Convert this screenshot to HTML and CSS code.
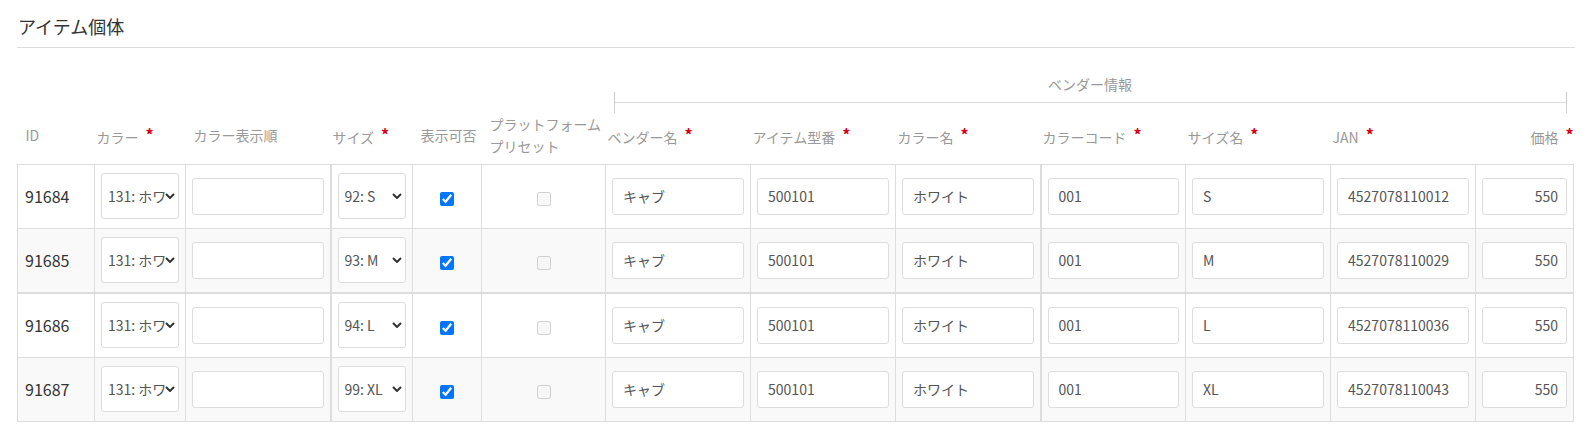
FILE: index.html
```html
<!DOCTYPE html>
<html lang="ja">
<head>
    <meta charset="UTF-8">
    <meta name="viewport" content="width=device-width, initial-scale=1.0">
    <title>アイテム個体</title>

    <!-- estilo -->
    <link rel="stylesheet" href="styles.css">
</head>
<body>
    <div id="itemSection">
        <h2 class="sectionTitle">アイテム個体</h2>

        <table class="itemTable">
            <colgroup>
                <col class="colId">
                <col class="colColor">
                <col class="colOrder">
                <col class="colSize">
                <col class="colShow">
                <col class="colPreset">
                <col class="colWide">
                <col class="colWide">
                <col class="colWide">
                <col class="colWide">
                <col class="colWide">
                <col class="colWide">
                <col class="colPrice">
            </colgroup>
            <thead>
                <tr>
                    <th colspan="6"></th>
                    <th colspan="7" class="groupHead">
                        <div class="groupLabel">ベンダー情報</div>
                        <div class="groupBracket">
                            <span class="tick"></span>
                            <span class="line"></span>
                            <span class="tick"></span>
                        </div>
                    </th>
                </tr>
                <tr class="labelRow">
                    <th class="padWide">ID</th>
                    <th>カラー<span class="req">*</span></th>
                    <th class="padWide">カラー表示順</th>
                    <th>サイズ<span class="req">*</span></th>
                    <th class="padWide">表示可否</th>
                    <th class="padWide">プラットフォーム<br>プリセット</th>
                    <th>ベンダー名<span class="req">*</span></th>
                    <th>アイテム型番<span class="req">*</span></th>
                    <th>カラー名<span class="req">*</span></th>
                    <th>カラーコード<span class="req">*</span></th>
                    <th>サイズ名<span class="req">*</span></th>
                    <th>JAN<span class="req">*</span></th>
                    <th class="alignRight">価格<span class="req">*</span></th>
                </tr>
            </thead>
            <tbody>
                <tr>
                    <td class="idCell">91684</td>
                    <td>
                        <div class="selectWrap">
                            <select class="field"><option>131: ホワイト</option></select>
                            <svg class="chevron" viewBox="0 0 10 6"><path d="M1 1l4 4 4-4"/></svg>
                        </div>
                    </td>
                    <td><input class="field" type="text"></td>
                    <td class="splitLeft">
                        <div class="selectWrap">
                            <select class="field"><option>92: S</option></select>
                            <svg class="chevron" viewBox="0 0 10 6"><path d="M1 1l4 4 4-4"/></svg>
                        </div>
                    </td>
                    <td class="center"><input type="checkbox" checked></td>
                    <td class="center"><input type="checkbox" disabled></td>
                    <td><input class="field" type="text" value="キャブ"></td>
                    <td><input class="field" type="text" value="500101"></td>
                    <td><input class="field" type="text" value="ホワイト"></td>
                    <td class="splitLeft"><input class="field" type="text" value="001"></td>
                    <td><input class="field" type="text" value="S"></td>
                    <td><input class="field" type="text" value="4527078110012"></td>
                    <td><input class="field price" type="text" value="550"></td>
                </tr>
                <tr class="striped">
                    <td class="idCell">91685</td>
                    <td>
                        <div class="selectWrap">
                            <select class="field"><option>131: ホワイト</option></select>
                            <svg class="chevron" viewBox="0 0 10 6"><path d="M1 1l4 4 4-4"/></svg>
                        </div>
                    </td>
                    <td><input class="field" type="text"></td>
                    <td class="splitLeft">
                        <div class="selectWrap">
                            <select class="field"><option>93: M</option></select>
                            <svg class="chevron" viewBox="0 0 10 6"><path d="M1 1l4 4 4-4"/></svg>
                        </div>
                    </td>
                    <td class="center"><input type="checkbox" checked></td>
                    <td class="center"><input type="checkbox" disabled></td>
                    <td><input class="field" type="text" value="キャブ"></td>
                    <td><input class="field" type="text" value="500101"></td>
                    <td><input class="field" type="text" value="ホワイト"></td>
                    <td class="splitLeft"><input class="field" type="text" value="001"></td>
                    <td><input class="field" type="text" value="M"></td>
                    <td><input class="field" type="text" value="4527078110029"></td>
                    <td><input class="field price" type="text" value="550"></td>
                </tr>
                <tr class="groupStart">
                    <td class="idCell">91686</td>
                    <td>
                        <div class="selectWrap">
                            <select class="field"><option>131: ホワイト</option></select>
                            <svg class="chevron" viewBox="0 0 10 6"><path d="M1 1l4 4 4-4"/></svg>
                        </div>
                    </td>
                    <td><input class="field" type="text"></td>
                    <td class="splitLeft">
                        <div class="selectWrap">
                            <select class="field"><option>94: L</option></select>
                            <svg class="chevron" viewBox="0 0 10 6"><path d="M1 1l4 4 4-4"/></svg>
                        </div>
                    </td>
                    <td class="center"><input type="checkbox" checked></td>
                    <td class="center"><input type="checkbox" disabled></td>
                    <td><input class="field" type="text" value="キャブ"></td>
                    <td><input class="field" type="text" value="500101"></td>
                    <td><input class="field" type="text" value="ホワイト"></td>
                    <td class="splitLeft"><input class="field" type="text" value="001"></td>
                    <td><input class="field" type="text" value="L"></td>
                    <td><input class="field" type="text" value="4527078110036"></td>
                    <td><input class="field price" type="text" value="550"></td>
                </tr>
                <tr class="striped">
                    <td class="idCell">91687</td>
                    <td>
                        <div class="selectWrap">
                            <select class="field"><option>131: ホワイト</option></select>
                            <svg class="chevron" viewBox="0 0 10 6"><path d="M1 1l4 4 4-4"/></svg>
                        </div>
                    </td>
                    <td><input class="field" type="text"></td>
                    <td class="splitLeft">
                        <div class="selectWrap">
                            <select class="field"><option>99: XL</option></select>
                            <svg class="chevron" viewBox="0 0 10 6"><path d="M1 1l4 4 4-4"/></svg>
                        </div>
                    </td>
                    <td class="center"><input type="checkbox" checked></td>
                    <td class="center"><input type="checkbox" disabled></td>
                    <td><input class="field" type="text" value="キャブ"></td>
                    <td><input class="field" type="text" value="500101"></td>
                    <td><input class="field" type="text" value="ホワイト"></td>
                    <td class="splitLeft"><input class="field" type="text" value="001"></td>
                    <td><input class="field" type="text" value="XL"></td>
                    <td><input class="field" type="text" value="4527078110043"></td>
                    <td><input class="field price" type="text" value="550"></td>
                </tr>
            </tbody>
        </table>
    </div>
</body>
</html>
```

FILE: styles.css
```css
body {
    margin: 0;
    font-family: "Noto Sans CJK JP", "Noto Sans", sans-serif;
    color: #333;
    background-color: white;
}

#itemSection {
    padding: 0 17px;
}

.sectionTitle {
    margin: 0;
    padding: 13px 0 8px 1px;
    font-size: 18px;
    line-height: 26px;
    font-weight: normal;
    color: #333;
    border-bottom: 1px solid #ddd;
}

.itemTable {
    margin-top: 28px;
    width: 1555px;
    table-layout: fixed;
    border-collapse: collapse;
}

.colId { width: 77px; }
.colColor { width: 91px; }
.colOrder { width: 145px; }
.colSize { width: 82px; }
.colShow { width: 69px; }
.colPreset { width: 124px; }
.colWide { width: 145px; }
.colPrice { width: 98px; }

th {
    padding: 0 2px 7px;
    font-size: 14px;
    line-height: 22px;
    font-weight: normal;
    color: #999;
    text-align: left;
    vertical-align: middle;
    white-space: nowrap;
}

.padWide {
    padding-left: 8px;
}

.alignRight {
    text-align: right;
    padding-right: 0;
}

.req {
    margin-left: 7px;
    color: #d9001b;
    font-size: 16px;
    font-weight: bold;
    vertical-align: 2px;
}

.groupHead {
    padding: 0 7px 0 8px;
}

.groupLabel {
    text-align: center;
    line-height: 16px;
    color: #999;
}

.groupBracket {
    display: flex;
    align-items: center;
    height: 21px;
}

.groupBracket .tick {
    width: 1px;
    height: 21px;
    background-color: #ccc;
}

.groupBracket .line {
    flex: 1;
    height: 1px;
    background-color: #ddd;
}

td {
    padding: 8px 6px 9px;
    border: 1px solid #ddd;
    vertical-align: middle;
    background-color: white;
}

.striped td {
    background-color: #f9f9f9;
}

.groupStart td {
    border-top: 2px solid #ddd;
}

.splitLeft {
    border-left: 2px solid #ddd;
}

.idCell {
    padding-left: 7px;
    font-size: 16px;
    color: #333;
}

.center {
    text-align: center;
}

.center input {
    width: 14px;
    height: 14px;
    margin: 0;
    vertical-align: middle;
}

.field {
    box-sizing: border-box;
    width: 100%;
    height: 37px;
    padding: 0 10px;
    font-family: "Noto Sans CJK JP", "Noto Sans", sans-serif;
    font-size: 14px;
    color: #555;
    background-color: white;
    border: 1px solid #ddd;
    border-radius: 3px;
    display: block;
}

.selectWrap {
    position: relative;
}

select.field {
    height: 46px;
    padding: 0 11px 0 6px;
    appearance: none;
    -webkit-appearance: none;
}

.chevron {
    position: absolute;
    right: 4px;
    top: 20px;
    width: 10px;
    height: 6px;
    fill: none;
    stroke: #333;
    stroke-width: 2;
    pointer-events: none;
}

.price {
    text-align: right;
    padding-right: 8px;
}
```
